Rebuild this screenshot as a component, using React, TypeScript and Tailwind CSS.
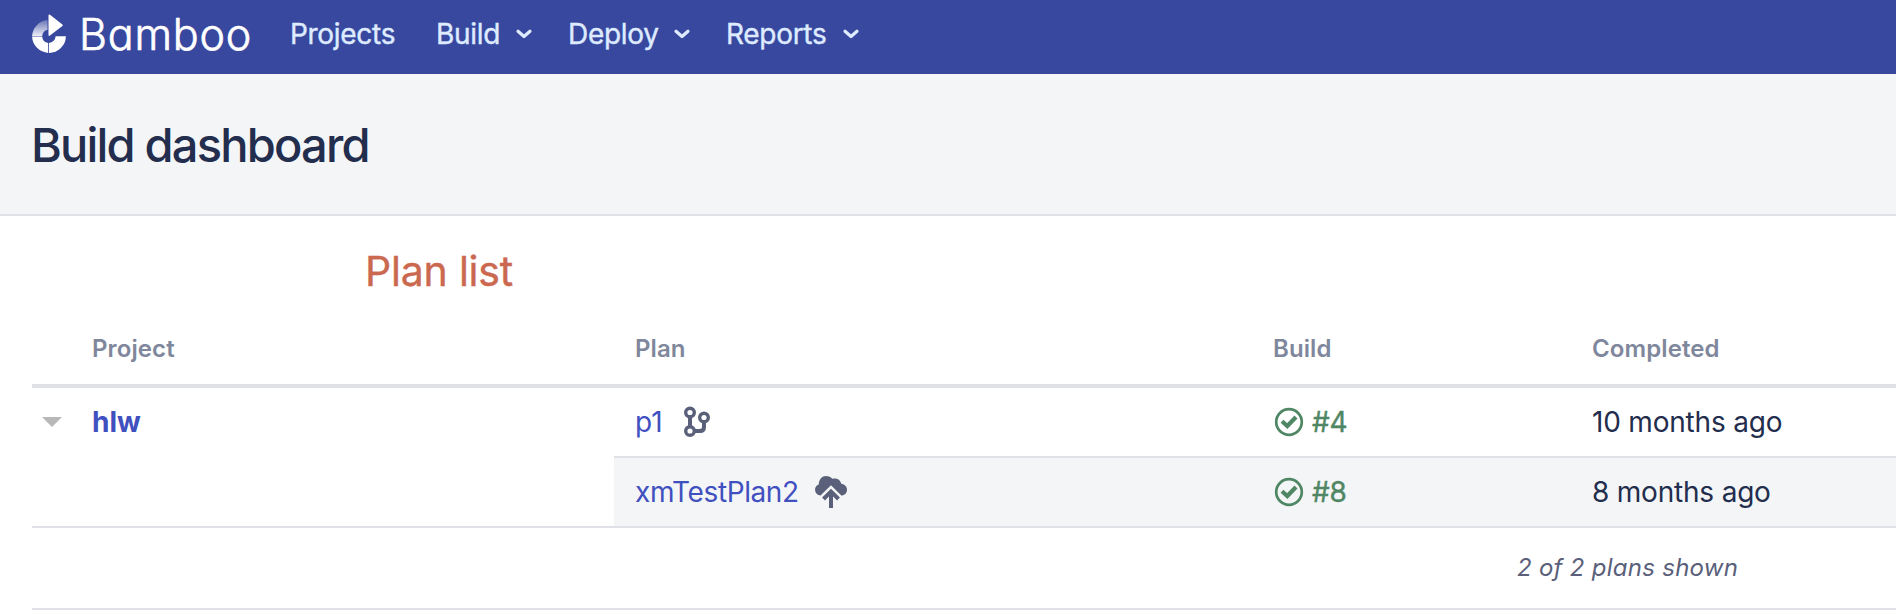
function Logo() {
  return (
    <svg width="36" height="40" viewBox="0 0 36 40" className="shrink-0">
      <defs>
        <linearGradient id="fade" x1="0" y1="0" x2="0" y2="1">
          <stop offset="0" stopColor="#fff" stopOpacity="0.25" />
          <stop offset="1" stopColor="#fff" stopOpacity="0.9" />
        </linearGradient>
      </defs>
      <path d="M16.500 1.500v19.700c0 .6.7.9 1.100.5L30.400 12a.9.9 0 0 0 0-1.400L18 .8c-.6-.5-1.500-.1-1.500.7Z" fill="#fff" />
      <path d="M15.500 6A17 17 0 0 0 .1 22h10.100a7 7 0 0 1 5.300-6.200Z" fill="url(#fade)" />
      <path d="M.1 22.600A17 17 0 0 0 16.200 38.900V29a6.800 6.800 0 0 1-6-6.400Z" fill="#fff" />
      <path d="M33.900 22.200A17 17 0 0 1 17 38.900V28.900a6.800 6.800 0 0 0 6.600-6.700Z" fill="#fff" />
    </svg>
  );
}

function Chevron() {
  return (
    <svg width="18" height="12" viewBox="0 0 18 12" className="shrink-0">
      <path d="M3 3.200 9 8.500 15 3.200" fill="none" stroke="#deebff" strokeWidth="3.200" strokeLinecap="round" strokeLinejoin="round" />
    </svg>
  );
}

function BranchIcon() {
  return (
    <svg width="28" height="32" viewBox="0 0 28 32" fill="none" stroke="#5a607a" strokeWidth="3.400">
      <circle cx="7" cy="6.500" r="4.300" />
      <circle cx="7" cy="25" r="4.300" />
      <circle cx="21" cy="11.500" r="4.300" />
      <path d="M7 11v10M11 25h6q4 0 4-4v-5.500" strokeWidth="4" />
    </svg>
  );
}

function CloudIcon() {
  return (
    <svg width="34" height="34" viewBox="0 0 34 34">
      <path
        d="M6.500 20.500A6 6 0 0 1 1 14.700c0-2.500 1.500-4.500 3.700-5.300C5 4.500 8 1 12 1c2.700 0 4.800 1 6.200 2.800 4.500-1.300 8.300.9 9.100 5 3.300.4 5.700 2.700 5.700 5.900 0 3.300-2.500 5.800-5.700 5.800L17 10.200Z"
        fill="#5a607a"
      />
      <path d="M17 33V15.500M9.500 24 17 16.500 24.500 24" fill="none" stroke="#5a607a" strokeWidth="4" />
    </svg>
  );
}

function SuccessIcon() {
  return (
    <svg width="30" height="30" viewBox="0 0 30 30" fill="none" stroke="#4f8663">
      <circle cx="15" cy="15" r="12.800" strokeWidth="2.700" />
      <path d="M8 14.300 13.300 19 22 10" strokeWidth="4.200" />
    </svg>
  );
}

function NavItem({ label, className, menu = true }: { label: string; className: string; menu?: boolean }) {
  return (
    <a className={"flex shrink-0 items-center justify-between " + className}>
      <span>{label}</span>
      {menu && <Chevron />}
    </a>
  );
}

function BuildResult({ number }: { number: number }) {
  return (
    <div className="flex items-center gap-2 pl-px text-[#4f8663]">
      <SuccessIcon />
      <span className="tracking-[-0.2px] [-webkit-text-stroke:0.4px_#4f8663]">#{number}</span>
    </div>
  );
}

const COLUMNS = "grid grid-cols-[60px_521px_22px_638px_319px_1fr]";

export default function App() {
  return (
    <div className="h-[616px] w-full overflow-hidden bg-white font-['Inter',sans-serif] text-[28px] leading-[34px] text-[#232d4d]">
      <header className="flex h-[74px] items-center bg-[#38489f] pb-[6px] pl-8 text-[28px] tracking-[-0.300px] text-[#deebff] [-webkit-text-stroke:0.4px_#deebff]">
        <Logo />
        <span className="ml-[11px] w-[211px] text-[43px] font-light tracking-[0.8px] text-white [-webkit-text-stroke:0.7px_#fff] [font-feature-settings:'cv11']">
          Bamboo
        </span>
        <NavItem label="Projects" menu={false} className="w-[146px]" />
        <NavItem label="Build" className="mr-[35px] w-[97px]" />
        <NavItem label="Deploy" className="mr-[35px] w-[123px]" />
        <NavItem label="Reports" className="w-[134px]" />
      </header>

      <section className="flex h-[142px] items-center border-b-2 border-[#dfe1e6] bg-[#f4f5f7] pt-px pl-[31px]">
        <h1 className="text-[47px] font-medium tracking-[-1.800px]">Build dashboard</h1>
      </section>

      <main className="pl-8">
        <h2 className="flex h-[112px] items-center pb-[3px] pl-[333px] text-[41px] tracking-[-0.2px] text-[#cb6850] [-webkit-text-stroke:0.4px_#cb6850]">
          Plan list
        </h2>

        <div className={COLUMNS + " h-[60px] items-center border-b-4 border-[#dfe1e6] pb-[14px] text-[24px] font-semibold tracking-[0.1px] text-[#7f879c]"}>
          <span />
          <span>Project</span>
          <span />
          <span>Plan</span>
          <span>Build</span>
          <span>Completed</span>
        </div>

        <div className="flex h-[140px] border-b-2 border-[#dfe1e6]">
          <div className="flex h-[68px] w-[582px] items-center pb-px">
            <svg width="60" height="12" viewBox="0 0 60 12">
              <path d="M10 1h20L20 11Z" fill="#b8b8b8" />
            </svg>
            <a className="font-bold text-[#4050bf]">hlw</a>
          </div>
          <div className="flex-1">
            <div className="grid h-[68px] grid-cols-[638px_319px_1fr] items-center pb-px pl-[21px]">
              <div className="flex items-center gap-5 text-[#4050bf]">
                <a>p1</a>
                <BranchIcon />
              </div>
              <BuildResult number={4} />
              <span className="tracking-[-0.2px]">10 months ago</span>
            </div>
            <div className="grid h-[70px] grid-cols-[638px_319px_1fr] items-center border-t-2 border-[#dfe1e6] bg-[#f4f5f7] pb-px pl-[21px]">
              <div className="flex items-center gap-[15px] text-[#4050bf]">
                <a className="tracking-[-0.400px]">xmTestPlan2</a>
                <CloudIcon />
              </div>
              <BuildResult number={8} />
              <span className="tracking-[-0.2px]">8 months ago</span>
            </div>
          </div>
        </div>

        <p className="flex h-[82px] items-center border-b-2 border-[#dfe1e6] pl-[1485px] text-[24px] tracking-[0.27px] text-[#5a607a] italic">
          2 of 2 plans shown
        </p>
      </main>
    </div>
  );
}
